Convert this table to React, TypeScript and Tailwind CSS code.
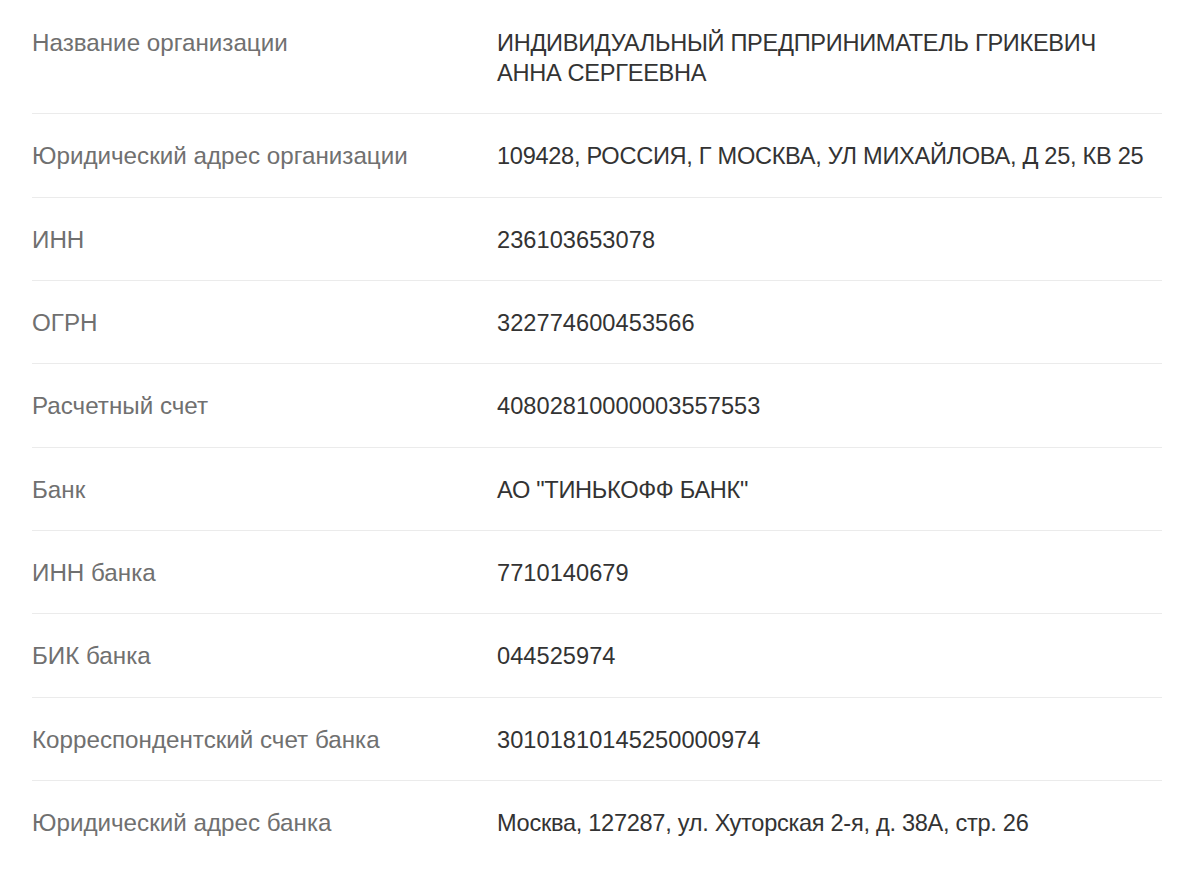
import React from "react";

const rows: [string, string, boolean][] = [
  ["Название организации", "ИНДИВИДУАЛЬНЫЙ ПРЕДПРИНИМАТЕЛЬ ГРИКЕВИЧ АННА СЕРГЕЕВНА", true],
  ["Юридический адрес организации", "109428, РОССИЯ, Г МОСКВА, УЛ МИХАЙЛОВА, Д 25, КВ 25", true],
  ["ИНН", "236103653078", false],
  ["ОГРН", "322774600453566", false],
  ["Расчетный счет", "40802810000003557553", false],
  ["Банк", "АО \"ТИНЬКОФФ БАНК\"", true],
  ["ИНН банка", "7710140679", false],
  ["БИК банка", "044525974", false],
  ["Корреспондентский счет банка", "30101810145250000974", false],
  ["Юридический адрес банка", "Москва, 127287, ул. Хуторская 2-я, д. 38А, стр. 26", true],
];

export default function App() {
  return (
    <div
      className="min-h-[875px] bg-white pl-[32px] pr-[38px] pt-[1px]"
      style={{ fontFamily: '"Liberation Sans", Arial, sans-serif' }}
    >
      {rows.map(([label, value, tight], i) => (
        <div
          key={i}
          className={
            "grid grid-cols-[465px_1fr] pt-[27px] pb-[25.33px] leading-[30px] " +
            (i < rows.length - 1 ? "border-b border-[#ebebeb]" : "")
          }
        >
          <div className="text-[#707070] text-[24.2px]">{label}</div>
          <div
            className={
              "text-[#333333] text-[23.6px] " + (tight ? "tracking-[-0.3px]" : "tracking-[0.05px]")
            }
          >
            {value}
          </div>
        </div>
      ))}
    </div>
  );
}
